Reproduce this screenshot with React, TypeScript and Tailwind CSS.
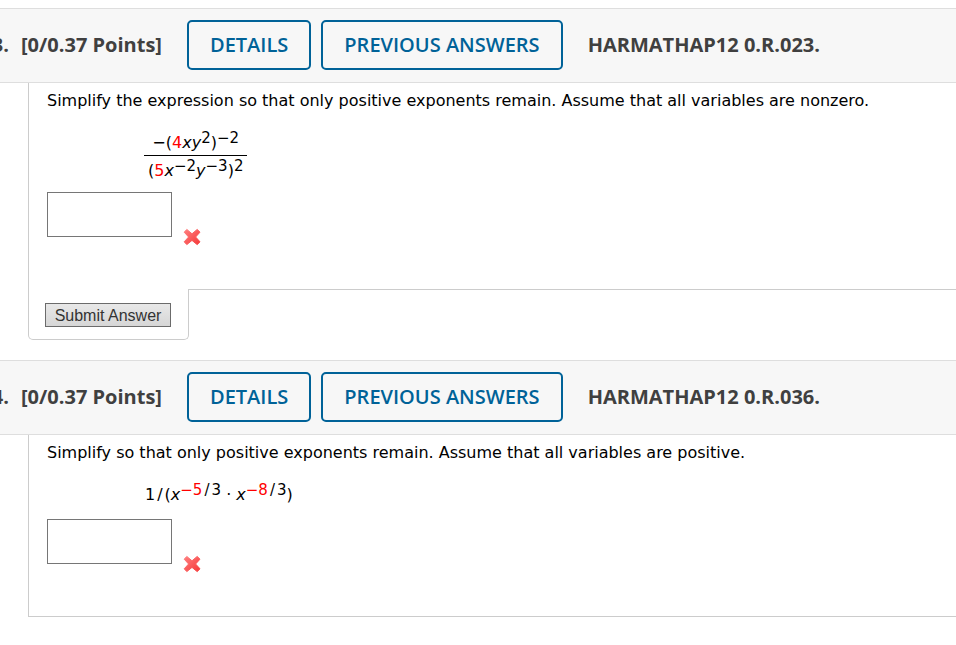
import React from "react";

interface QuestionProps {
  number: number;
  code: string;
  prompt: string;
  canSubmit?: boolean;
  children: React.ReactNode;
}

function Sup({ children }: { children: React.ReactNode }) {
  return <sup className="relative -top-[5px] align-baseline text-[15px] leading-none">{children}</sup>;
}

function Red({ children }: { children: React.ReactNode }) {
  return <span className="text-[#ff0000]">{children}</span>;
}

function Slash() {
  return <span className="mx-0.5">/</span>;
}

function WrongMark() {
  return (
    <svg width="18" height="18" viewBox="0 0 18 18" role="img" aria-label="Incorrect">
      <defs>
        <linearGradient id="wrong" x1="0" y1="0" x2="1" y2="1">
          <stop offset="0" stopColor="#ff8080" />
          <stop offset="1" stopColor="#f53838" />
        </linearGradient>
      </defs>
      <path
        d="M3.8 1.4 L9 5.8 L14.2 1.4 L17 4.2 L12.6 9 L17 13.8 L14.2 16.6 L9 12.4 L3.8 16.6 L1.2 13.8 L5.6 9 L1.2 4.2 Z"
        fill="url(#wrong)"
        stroke="url(#wrong)"
        strokeWidth="1"
        strokeLinejoin="round"
      />
    </svg>
  );
}

function HeaderButton({ children }: { children: React.ReactNode }) {
  return (
    <button
      type="button"
      className="h-[50px] shrink-0 rounded-[5px] border-2 border-[#006298] px-[21px] font-semibold whitespace-nowrap text-[#006298]"
    >
      {children}
    </button>
  );
}

function Question({ number, code, prompt, canSubmit, children }: QuestionProps) {
  return (
    <section>
      <header className="flex items-center border-y border-[#dedede] bg-[#f7f7f7] pt-[11px] pb-3 font-['Open_Sans',sans-serif] text-xl text-[#404040]">
        {/* the question number runs off the left edge */}
        <div className="flex w-[9px] shrink-0 justify-end overflow-hidden font-bold">{number}.</div>
        <div className="ml-3 w-[166px] shrink-0 font-bold whitespace-nowrap">[0/0.37 Points]</div>
        <div className="flex gap-2.5">
          <HeaderButton>DETAILS</HeaderButton>
          <HeaderButton>PREVIOUS ANSWERS</HeaderButton>
        </div>
        <h2 className="ml-[25px] font-bold whitespace-nowrap">{code}</h2>
      </header>

      <form className="ml-7" onSubmit={(e) => e.preventDefault()}>
        <div
          className={
            canSubmit
              ? "border-l border-[#cccccc] pt-1.5 pb-[43px] pl-[18px]"
              : "border-b border-l border-[#cccccc] pt-1.5 pb-[43px] pl-[18px]"
          }
        >
          <p className="leading-6 whitespace-nowrap">{prompt}</p>
          {children}
          <div className="flex items-end gap-[11px]">
            <input
              type="text"
              aria-label={`Answer to question ${number}`}
              className="mb-[9px] h-[45px] w-[125px] border border-[#767676] bg-white px-2"
            />
            <WrongMark />
          </div>
        </div>
        {canSubmit && (
          <div className="flex">
            <div className="w-[161px] rounded-b-[5px] border-r border-b border-l border-[#cccccc] pt-3.5 pb-3 pl-4">
              <button
                type="submit"
                className="block h-6 w-[126px] border border-[#6b6b6b] bg-linear-to-b from-[#e8e8e8] to-[#d6d6d6] font-['Liberation_Sans',Arial,sans-serif] text-base leading-6 text-[#333333]"
              >
                Submit Answer
              </button>
            </div>
            <div className="flex-1 border-t border-[#cccccc]" />
          </div>
        )}
      </form>
    </section>
  );
}

export default function App() {
  return (
    <main className="flex flex-col gap-5 overflow-hidden bg-white pt-2 font-['DejaVu_Sans',Verdana,sans-serif] text-base text-black">
      <Question
        number={3}
        code="HARMATHAP12 0.R.023."
        prompt="Simplify the expression so that only positive exponents remain. Assume that all variables are nonzero."
        canSubmit
      >
        <div className="mt-[18px] mb-1.5 ml-[97px] flex w-fit flex-col items-center">
          <div className="w-full border-b border-black text-center leading-6">
            −(<Red>4</Red>
            <i>xy</i>
            <Sup>2</Sup>)<Sup>−2</Sup>
          </div>
          <div className="px-1 leading-[30px]">
            (<Red>5</Red>
            <i>x</i>
            <Sup>−2</Sup>
            <i>y</i>
            <Sup>−3</Sup>)<Sup>2</Sup>
          </div>
        </div>
      </Question>

      <Question
        number={4}
        code="HARMATHAP12 0.R.036."
        prompt="Simplify so that only positive exponents remain. Assume that all variables are positive."
      >
        <div className="mt-4 mb-2.5 ml-[98px] leading-7">
          1<Slash />(<i>x</i>
          <Sup>
            <Red>−5</Red>
            <Slash />3
          </Sup>{" "}
          · <i>x</i>
          <Sup>
            <Red>−8</Red>
            <Slash />3
          </Sup>
          )
        </div>
      </Question>
    </main>
  );
}
